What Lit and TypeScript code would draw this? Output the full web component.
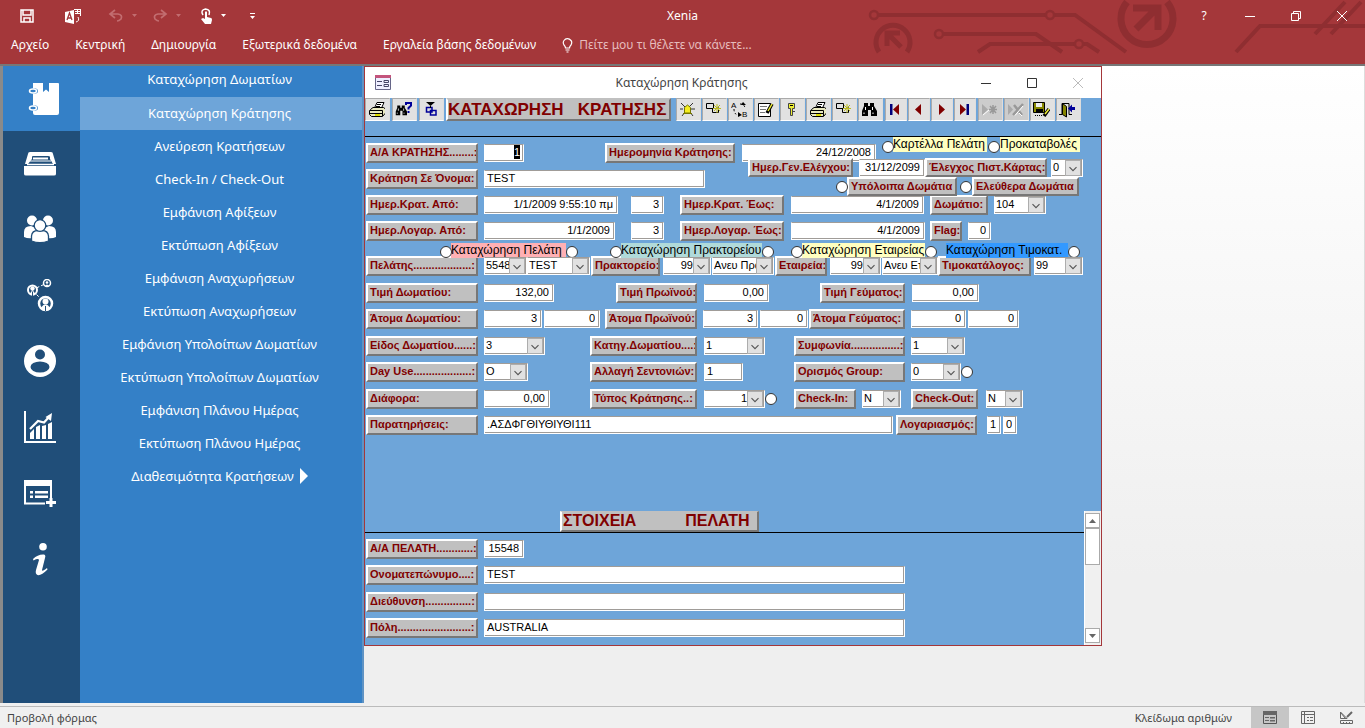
import { LitElement, html, css, svg, nothing } from "lit";
import { customElement, state } from "lit/decorators.js";
import { classMap } from "lit/directives/class-map.js";

const MENU = [
  "Καταχώρηση Δωματίων",
  "Καταχώρηση Κράτησης",
  "Ανεύρεση Κρατήσεων",
  "Check-In / Check-Out",
  "Εμφάνιση Αφίξεων",
  "Εκτύπωση Αφίξεων",
  "Εμφάνιση Αναχωρήσεων",
  "Εκτύπωση Αναχωρήσεων",
  "Εμφάνιση Υπολοίπων Δωματίων",
  "Εκτύπωση Υπολοίπων Δωματίων",
  "Εμφάνιση Πλάνου Ημέρας",
  "Εκτύπωση Πλάνου Ημέρας",
  "Διαθεσιμότητα Κρατήσεων",
];

const SECTIONS = [
  { name: "Κρατήσεις", icon: svg`<path fill="#fff" d="M6 1H16V10L19 7.500L22 10V1H31Q32 1 32 2V31Q32 33 30 33H8Q6 33 6 31V28.500H9Q11 28 11 26T9 23.500H6V11.500H9Q11 11 11 9T9 6.500H6Z"/><ellipse cx="6" cy="9" rx="3.500" ry="2" fill="none" stroke="#fff" stroke-width="1.500"/><ellipse cx="6" cy="26" rx="3.500" ry="2" fill="none" stroke="#fff" stroke-width="1.500"/>` },
  { name: "Δωμάτια", icon: svg`<path fill="#fff" d="M6 5H27Q29 5 29 7L32 17H29L26 12V10Q26 9 24 9H9Q8 9 8 10V12L4 17H1L4 7Q4 5 6 5ZM9 10.500H24V12.500H9ZM0 19H32V27Q32 28.500 30 28.500H2Q0 28.500 0 27Z"/><path stroke="#fff" d="M3 17.500H30" stroke-width="1.500"/><path stroke="#fff" d="M6 14H27"/>` },
  { name: "Πελάτες", icon: svg`<g fill="#fff"><circle cx="8" cy="7.500" r="5"/><circle cx="24" cy="7.500" r="5"/><path d="M0 24V19Q0 13 7 13L16 17L25 13Q32 13 32 19V24Q28 26 23 25H9Q4 26 0 24Z"/></g><g fill="#fff" stroke="#204e79" stroke-width="1.300"><path d="M7.500 28V23Q8 17.500 14 17.500H18Q24 17.500 24.500 23V28Q16 31.500 7.500 28Z"/><circle cx="16" cy="12.500" r="5.800"/></g>` },
  { name: "Συνεργάτες", icon: svg`<path stroke="#fff" d="M8 11L23 4M9 12L22 25" stroke-dasharray="3 2"/><g fill="#204e79" stroke="#fff"><circle cx="23" cy="4" r="3.500" stroke-width="1.500"/><circle cx="8.500" cy="11" r="4.500" stroke-width="2"/><circle cx="21.500" cy="24.500" r="6.500" stroke-width="2.500"/></g><g fill="#fff"><circle cx="23" cy="3.500" r="1.300"/><path d="M21 7Q23 4 25 7Z"/><circle cx="8.500" cy="9.500" r="2.200"/><path d="M5.500 15L8.500 11L11.500 15L8.500 17Z"/><circle cx="21.500" cy="22.500" r="3"/><path d="M17 30Q18 25.500 21.500 25.500T26 30L21.500 32Z"/></g><path d="M8.500 12.500V17M21.500 27V32" stroke="#204e79"/>` },
  { name: "Χρήστης", icon: svg`<circle cx="16" cy="16" r="16" fill="#fff"/><circle cx="16" cy="9.500" r="5" fill="#204e79"/><ellipse cx="16" cy="22" rx="9.500" ry="5.500" fill="#204e79"/>` },
  { name: "Στατιστικά", icon: svg`<path fill="#fff" d="M0 0H2V30H32V32H0ZM6 22L10 18V28H6ZM12 16L16 14V28H12ZM18 15L22 14V28H18ZM24 13L28 11V28H24Z"/><path fill="none" stroke="#fff" stroke-width="2.200" d="M6 18L14 10L20 11.500L25 6"/><path fill="#fff" d="M28 2L21.500 6L27 10Z"/>` },
  { name: "Λίστα", icon: svg`<path fill="#fff" d="M0 3H28V9H2V25.500H21V27.500H0ZM26 9H28V21H26ZM6 14H9V16.500H6ZM6 18.500H9V21H6ZM11 14H24V16.500H11ZM11 18.500H24V21H11Z"/><path stroke="#fff" stroke-width="3" d="M27 21V30M22 25.500H32"/>` },
  { name: "Πληροφορίες", icon: svg`<circle cx="19" cy="3.800" r="3.800" fill="#fff"/><path fill="#fff" d="M9 16Q14 11 20 11.500Q22 12 21 15L18 27Q18 29 23 25L23.500 26.500Q17 33 13.500 32Q11 31 12 27L15 17Q14.500 15 9.500 17.500Z"/>` },
];

const printer = svg`<path fill="#fff" stroke="#000" d="M6.500 7L9 1.500H16L13.500 7"/><path stroke="#000" d="M9 3.500H13M8 5.500H12"/><path fill="#e8e8c0" stroke="#000" d="M2.500 8.500L5 6.500H15.500L17.500 8V12L14.500 15.500H3.500L1.500 13.500V9.500Z"/><path stroke="#000" fill="none" d="M2 9.500H14.500V15M2 12.500H14"/><path stroke="#dd0" stroke-width="2" d="M7 14H12"/>`;
const binoculars = svg`<path d="M3 2H7V5H9V2H13V5L16 10V15H10V9H7V15H1V10L3 5Z"/><path stroke="#fff" d="M4.500 6V9M11.500 6V9M3 11.500V13M12 11.500V13"/>`;
const windows = svg`<path fill="none" stroke="#000" d="M1.500 2.500H8.500V7.500H1.500ZM7.500 7.500V11.500H13.500V6.500"/><path stroke="#bb2" d="M9 4L15 10M15 4L9 10M12 3V12M8 7.500H16"/>`;

const GLYPHS: Record<string, unknown> = {
  printer, windows,
  find: svg`<g>${binoculars}</g>`,
  findHelp: svg`<g transform="translate(0 3) scale(.75)">${binoculars}</g><path fill="none" stroke="#009" stroke-width="2" d="M11 4V2H16V4.500L13.500 7V8.500M13.500 10V12"/>`,
  relate: svg`<path d="M4 1H13L8.500 5Z"/><path fill="none" stroke="#009" stroke-width="1.500" d="M4.500 6.500H10V11H4.500ZM8.500 9.500H14V14H8.500Z"/><path stroke="#000" d="M8.500 5V7"/>`,
  bell: svg`<path stroke="#333" d="M2 2L6 6M14 2L10 6M1 8H4M12 8H16M3 15L6 11M14 15L11 11"/><path fill="#f5ee20" stroke="#770" d="M5.500 12V6.500L8.500 4L11.500 6.500V12Z"/><path d="M4 12.500H13" stroke="#770"/>`,
  sort: svg`<path fill="none" stroke="#000" stroke-dasharray="2 2" d="M3 8Q3 14 8 14M9 3Q14 3 14 8"/><path d="M7 11L11 14L7 16ZM12 1L15 4H10Z"/><text x="0" y="7" font-size="8">A</text><text x="11" y="16" font-size="8">B</text>`,
  edit: svg`<path fill="#fff" stroke="#000" d="M1.500 2.500H13.500V15.500H1.500Z"/><path stroke="#777" d="M3 5.500H10M3 8.500H9M3 11.500H8"/><path stroke="#000" stroke-width="3.500" d="M15 3L10 12"/><path stroke="#ee3" stroke-width="1.500" d="M15 3L11 10"/>`,
  key: svg`<path fill="#ee3" stroke="#444" d="M5.500 2.500H11.500V7.500H9.500V14.500H7.500V7.500H5.500ZM10 10.500H12"/><path stroke="#000" d="M7 4.500H10"/>`,
  first: svg`<path fill="#00007a" d="M3 3H5.500V14H3Z"/><path fill="#800000" d="M12 3V14L6 8.500Z"/>`,
  prev: svg`<path fill="#800000" d="M11 3V14L5 8.500Z"/>`,
  next: svg`<path fill="#800000" d="M6 3V14L12 8.500Z"/>`,
  last: svg`<path fill="#800000" d="M4 3V14L10 8.500Z"/><path fill="#00007a" d="M10.500 3H13V14H10.500Z"/>`,
  add: svg`<path fill="#aaa" d="M1 3V14L7 8.500Z"/><path stroke="#999" stroke-width="1.500" d="M12 4V13M8 8.500H16M9 5L15 12M15 5L9 12"/><path stroke="#fff" d="M2 14L8 9"/>`,
  remove: svg`<path fill="#aaa" d="M1 3V14L6 8.500Z"/><path stroke="#999" stroke-width="2.500" d="M6 14L16 3M7 4L15 14"/><path stroke="#fff" d="M8 14.500L16 5M12 12L15 15"/>`,
  save: svg`<path fill="#880" stroke="#000" d="M.500 1.500H11.500V11.500H.500Z"/><path fill="#eee" d="M3 2H9V6H3Z"/><path d="M3 8H10V11H3Z"/><path stroke="#000" stroke-dasharray="1 1" d="M2 14.500H9"/><path stroke="#000" stroke-width="3.500" d="M16 8L11 15"/><path stroke="#ee3" stroke-width="1.500" d="M16 8L12 13"/>`,
  exit: svg`<path fill="none" stroke="#000" d="M0 13.500H3V2.500H10V13.500H13"/><path fill="#880" stroke="#000" d="M3.500 2.500L7.500 5.500V16L3.500 13.500Z"/><path fill="#009" d="M16 6H13V3.500L9 7.500L13 11.500V9H16Z"/>`,
};

type Tool = [name: string, title: string];
const TOOLS: Tool[][] = [
  [["printer", "Εκτύπωση"], ["findHelp", "Αναζήτηση"], ["relate", "Σχέσεις"]],
  [["bell", "Ειδοποίηση"], ["windows", "Παράθυρα"], ["sort", "Αντικατάσταση"], ["edit", "Επεξεργασία"], ["key", "Κλειδί"], ["printer", "Εκτύπωση φόρμας"], ["windows", "Νέο παράθυρο"], ["find", "Εύρεση"]],
  [["first", "Πρώτη"], ["prev", "Προηγούμενη"], ["next", "Επόμενη"], ["last", "Τελευταία"]],
  [["add", "Προσθήκη"], ["remove", "Διαγραφή"], ["save", "Αποθήκευση"], ["exit", "Έξοδος"]],
];

const label = (text: string, id: string) => html`<label class="tag" for=${id}>${text}</label>`;
const field = (id: string, value: string, num = true, name = "") => html`
  <input class=${classMap({ field: true, num })} id=${id} .value=${value} aria-label=${name || nothing} />`;
const combo = (id: string, value: string, num = false, name = "") => html`
  <span class="combo">
    <select class=${classMap({ num })} id=${id} aria-label=${name || nothing}><option>${value}</option></select>
    <svg viewBox="0 0 16 16" aria-hidden="true"><path fill="none" stroke="#555" stroke-width="1.300" d="M4 7L8 11L12 7"/></svg>
  </span>`;
const dot = (id: string, name = "") => html`
  <input class="dot" type="radio" name=${id} id=${id} aria-label=${name || nothing} />`;
const note = (text: string, id: string, tone: string) => html`<label class="note ${tone}" for=${id}>${text}</label>`;

@customElement("app-root")
export class AppRoot extends LitElement {
  @state() private active = 1;

  static styles = css`
    :host { display: flex; flex-direction: column; min-height: 100vh; font: 12px/16px "Noto Sans", "Open Sans", sans-serif; color: #222; background: #f0f0f0; }
    *, *::before { box-sizing: border-box; }
    button, input, select { font: inherit; color: inherit; margin: 0; border-radius: 0; }
    button { border: 0; padding: 0; background: none; }
    svg { display: block; flex: none; }

    .ribbon { position: relative; height: 66px; background: #a4373a; color: #fff; border-bottom: 2px solid #777; overflow: hidden; }
    .art { position: absolute; top: 0; right: 0; }
    .caption { position: relative; display: grid; grid-template-columns: 1fr auto 1fr; align-items: center; height: 32px; }
    .quick { display: flex; align-items: center; padding-left: 19px; }
    .controls { display: flex; justify-content: flex-end; align-items: center; }
    .controls button { width: 46px; display: grid; place-items: center; }
    .tabs { position: relative; display: flex; align-items: center; gap: 26px; height: 26px; padding-left: 11px; }
    .tabs a { color: #fff; text-decoration: none; }
    .tabs .tell { display: flex; align-items: center; gap: 6px; color: #e6bcbd; }

    .body { flex: 1; display: flex; align-items: stretch; min-height: 637px; border-left: 3px solid #8a8a8a; }
    .rail { width: 77px; background: #204e79; }
    .rail button { display: grid; place-items: center; width: 77px; height: 66px; padding: 0 3px 2px 0; }
    .rail button:first-child { height: 65px; background: #3480c7; padding: 0 0 0 3px; }
    .menu { width: 284px; background: #3480c7; border-right: 2px solid #5f93c4; padding-top: 1px; color: #fff; font-size: 13px; }
    .menu button { display: flex; justify-content: center; align-items: center; gap: 6px; width: 100%; height: 33px; padding: 0 3px 2px 0; white-space: nowrap; }
    .menu button:first-child { height: 30px; padding-bottom: 6px; }
    .menu .on { background: #6ea5d9; }
    .desk { flex: 1; min-width: 0; background: linear-gradient(#fff, #efefef 80%); border-right: 1px solid #ddd; }

    .window { width: 738px; border: 1px solid #a4373a; background: #6ea5d9; font: 11px/14px "Liberation Sans", Arial, sans-serif; color: #000; }
    .title { display: grid; grid-template-columns: 16px 1fr auto; align-items: center; height: 31px; padding-left: 10px; background: #fff; color: #444; font: 12px/16px "Noto Sans", "Open Sans", sans-serif; }
    .title span { text-align: center; padding-left: 9px; }
    .tools { display: flex; height: 39px; gap: 2px; border-bottom: 1px solid #000; align-items: flex-start; }
    .group { display: flex; gap: 1px; }
    .group:first-child { gap: 2px; }
    .group button { display: grid; place-items: center; width: 25px; height: 23px; padding-right: 2px; background: #e1e1e1; border: 1px solid #aaa; border-right-color: #ddd; border-bottom-color: #fff; }
    .group.nav button { width: 22px; }
    .group button:disabled { background: #ccc; }
    .heading { margin: 0; height: 23px; background: #c0c0c0; border: solid; border-width: 2px; border-color: #c0c0c0 #777 #777 #fff; color: #800000; font-size: 17px; line-height: 19px; font-weight: bold; white-space: pre; }
    .tools .heading { width: 225px; margin-right: 3px; }

    .top { display: grid; }
    .top > * { grid-area: 1 / 1; }
    .lines { display: grid; gap: 6px; padding-top: 6px; }
    .side { justify-self: start; margin-left: 383px; display: grid; grid-template-rows: 21px 19px 19px; align-content: start; }
    .row { display: grid; grid-auto-flow: column; height: 20px; align-items: center; }
    .side .row { height: 19px; }
    .row > :nth-child(1) { grid-column: 2; }
    .row > :nth-child(2) { grid-column: 4; }
    .row > :nth-child(3) { grid-column: 6; }
    .row > :nth-child(4) { grid-column: 8; }
    .row > :nth-child(5) { grid-column: 10; }
    .row > :nth-child(6) { grid-column: 12; }
    .row > :nth-child(7) { grid-column: 14; }
    .row > :nth-child(8) { grid-column: 16; }
    .row > :nth-child(9) { grid-column: 18; }
    .row > :nth-child(10) { grid-column: 20; }
    .row > :nth-child(11) { grid-column: 22; }
    .number { grid-template-columns: 1px 112px 6px 40px 81px 130px 7px 134px; }
    .guest { grid-template-columns: 1px 112px 6px 221px; }
    .cards { grid-template-columns: 134px 11px 0 94px 1px 11px 1px 80px; }
    .check { grid-template-columns: 0 105px 6px 66px 0 122px 4px 32px; }
    .rest { grid-template-columns: 88px 11px 0 110px 3px 11px 1px 107px; }
    .booked { grid-template-columns: 1px 112px 6px 134px 13px 33px 16px 104px 7px 133px 6px 58px 6px 52px; }
    .billed { grid-template-columns: 1px 112px 6px 131px 16px 33px 16px 104px 7px 134px 5px 32px 6px 23px; }
    .entries { grid-template-columns: 75px 11px 0 115px 0 11px 33px 11px 0 141px 0 11px 18px 11px 0 123px 0 11px 10px 122px 0 11px; }
    .parties { grid-template-columns: 1px 112px 6px 43px 0 63px 1px 69px 3px 48px 1px 62px 1px 52px 3px 51px 1px 56px 0 93px 3px 49px; }
    .prices { grid-template-columns: 1px 112px 6px 70px 62px 81px 7px 65px 51px 85px 7px 67px; }
    .people { grid-template-columns: 1px 112px 6px 58px 2px 56px 5px 92px 6px 55px 2px 48px 1px 96px 6px 55px 2px 51px; }
    .kinds { grid-template-columns: 1px 112px 6px 61px 45px 107px 7px 61px 29px 111px 6px 54px; }
    .usage { grid-template-columns: 1px 112px 6px 44px 62px 107px 7px 39px 51px 111px 6px 50px 0 11px; }
    .misc { grid-template-columns: 1px 112px 6px 66px 40px 107px 7px 61px 0 11px 18px 62px 6px 39px 10px 67px 8px 37px; }
    .remarks { grid-template-columns: 1px 112px 6px 409px 3px 81px 10px 14px 2px 14px; }
    .client { grid-template-columns: 1px 112px 6px 421px; }
    .entries.row { height: 17px; align-items: end; margin-bottom: -2px; position: relative; }
    .entries .note { align-self: end; }
    .more { display: grid; gap: 6px; padding-top: 7px; }
    .more .row:nth-child(even) { margin-bottom: 1px; }

    .tag { align-self: stretch; padding: 1px 0 0 2px; background: #c0c0c0; border: 2px solid; border-color: #fff #777 #777 #fff; color: #800000; font-weight: bold; line-height: 12px; white-space: nowrap; overflow: hidden; }
    .field, .combo { width: 100%; min-width: 0; height: 18px; background: #fff; border: 1px solid #fff; border-top-color: #a09c98; box-shadow: inset -1px -1px #a09c98; }
    .field { padding: 0 4px 2px 2px; outline: 0; }
    .num { text-align: right; text-align-last: right; }
    .keyed { display: flex; justify-content: flex-end; padding: 0 3px 2px; }
    .keyed input { width: 6px; height: 14px; padding: 0; border: 0; background: #000; color: #fff; outline: 0; }
    .combo { display: flex; position: relative; padding: 0 1px 1px 0; overflow: hidden; }
    .combo select { flex: 1; width: 0; min-width: 0; height: 15px; appearance: none; border: 0; background: #fff; padding: 0 0 0 1px; line-height: 15px; outline: 0; }
    .combo svg { width: 16px; height: 16px; background: #e1e1e1; border: 1px solid #adadad; pointer-events: none; }
    .dot { appearance: none; width: 12px; height: 12px; border: 1px solid #333; border-radius: 50%; background: #fff; position: relative; }
    .note { align-self: start; height: 15px; font-size: 12px; line-height: 14px; white-space: nowrap; overflow: hidden; }
    .yellow { background: #ffffc0; }
    .pink { background: #ffb0b4; }
    .teal { background: #b0dada; }
    .blue { background: #3399ff; }

    .detail { display: flex; height: 134px; margin-top: 75px; overflow: hidden; }
    .sheet { flex: 1; min-width: 0; }
    .band { display: flex; height: 22px; padding-left: 195px; border-bottom: 1px solid #000; }
    .band .heading { width: 199px; height: 21px; padding-left: 1px; border-top-width: 1px; line-height: 18px; font-size: 16px; }
    .sheet .more { padding-top: 6px; }
    .scroll { width: 17px; background: #f0f0f0; display: flex; flex-direction: column; padding: 2px 1px 2px 0; border-left: 1px solid #fff; }
    .scroll button { height: 15px; background: #fff; border: 1px solid #aaa; display: grid; place-items: center; }
    .thumb { height: 37px; background: #fff; border: 1px solid #aaa; margin-bottom: auto; }

    .status { display: flex; align-items: center; height: 22px; margin-top: 3px; padding-left: 7px; border-top: 1px solid #bbb; background: #f0f0f0; color: #444; font-size: 11px; line-height: 14px; }
    .status .views { display: flex; margin-left: 19px; align-self: stretch; }
    .status button { width: 38px; display: grid; place-items: center; }
    .status .on { background: #c6c6c6; }
    .lock { margin-left: auto; }
  `;

  render() {
    return html`
      ${this.ribbon()}
      <div class="body">
        <nav class="rail">
          ${SECTIONS.map((s) => html`<button aria-label=${s.name}><svg width="32" height="33" viewBox="0 0 32 33">${s.icon}</svg></button>`)}
        </nav>
        <nav class="menu">
          ${MENU.map((text, i) => html`
            <button class=${classMap({ on: i === this.active })} @click=${() => (this.active = i)}>
              ${text}${i === MENU.length - 1 ? html`<svg width="8" height="16"><path fill="#fff" d="M0 0L8 8L0 16Z"/></svg>` : nothing}
            </button>`)}
        </nav>
        <main class="desk">${this.window()}</main>
      </div>
      <footer class="status">
        <span>Προβολή φόρμας</span>
        <span class="lock">Κλείδωμα αριθμών</span>
        <span class="views">
          <button class="on" aria-label="Προβολή φόρμας"><svg width="14" height="13"><path fill="none" stroke="#555" d="M.500 .500H13.500V12.500H.500Z"/><path fill="#666" d="M0 0H14V4H0ZM2 6H6V7H2ZM2 9H6V10H2ZM7 6H12V7.500H7ZM7 9H12V10.500H7Z"/></svg></button>
          <button aria-label="Προβολή διάταξης"><svg width="14" height="13"><path fill="none" stroke="#666" d="M.500 .500H13.500V12.500H.500ZM0 3.500H14M3.500 0V13M6 6.500H8M9 6.500H12M6 9.500H8M9 9.500H12"/></svg></button>
          <button aria-label="Προβολή σχεδίασης"><svg width="15" height="14"><path fill="none" stroke="#666" d="M1.500 1V7.500H8ZM2 2L6 7M1.500 9.500H13.500V12.500H1.500ZM4.500 11V13M7.500 11V13M10.500 11V13"/><path stroke="#666" stroke-width="2" d="M13 1L8 6"/></svg></button>
        </span>
      </footer>`;
  }

  private ribbon() {
    return html`
      <header class="ribbon">
        <svg class="art" width="500" height="64" viewBox="865 0 500 64" aria-hidden="true">
          <g fill="none" stroke="#8f2e31" stroke-width="4">
            <circle cx="874" cy="15" r="4" stroke-width="2.500"/><path d="M878 15H1046M1054 15H1075L1126 52"/><circle cx="1050" cy="15" r="4" stroke-width="2.500"/>
            <circle cx="939" cy="34" r="4" stroke-width="2.500"/><path d="M943 34H1036L1062 52"/>
            <path d="M978 52L990 44H1075M1083 44H1087L1099 52"/><circle cx="1079" cy="44" r="4" stroke-width="2.500"/>
            <path d="M879 52A17 17 0 1 1 907 52" stroke-width="5"/>
            <path d="M900 33H887V46M888 34L901 47" stroke-width="5"/>
            <path d="M1127 2A26 26 0 1 0 1167 2" stroke-width="7"/>
            <path d="M1133 8H1158V30M1156 9L1136 29" stroke-width="7"/>
            <path d="M1236 52L1260 26H1365M1315 34L1345 2M1331 34L1361 2"/>
          </g>
        </svg>
        <div class="caption">
          <div class="quick">
            <svg width="225" height="18" viewBox="19 6 225 18" role="img" aria-label="Γραμμή γρήγορης πρόσβασης">
              <path fill="none" stroke="#fff" stroke-width="1.500" d="M21 9H33V21H21ZM23 9V14H31V9M24 21V17H30V21"/>
              <path fill="#fff" d="M65 11L74 9V23L65 21Z"/><path fill="none" stroke="#fff" d="M74 8.500H81M75 10.500H81M75 12.500H81M80.500 8V15M77.500 8V13M76 21Q80 20 78 16"/><path fill="none" stroke="#a4373a" stroke-width="1.300" d="M67 19L69.500 12L72 19M68 17H71"/>
              <g fill="none" stroke="#c26d70" stroke-width="1.700"><path d="M115 9L110 13L115 17M110 13H118Q123 14 121 18Q119 20 117 20"/><path d="M161 9L166 13L161 17M166 13H158Q153 14 155 18Q157 20 159 20"/></g>
              <path fill="#c26d70" d="M132 13H137L134.500 16ZM176 13H181L178.500 16Z"/>
              <path fill="#fff" d="M205 11Q206 9.500 207 11V16L211 17Q212 17 212 19L211 23H205L201 18L203 17L205 18Z"/><path fill="none" stroke="#fff" stroke-width="1.500" d="M203 14Q200 9 205.500 8Q211 8.500 209 14"/>
              <path fill="#fff" d="M221 13H226L223.500 16Z"/>
            </svg>
            <svg width="16" height="10"><path fill="#fff" d="M6 2H11V3H6ZM6 5H11L8.500 8Z"/></svg>
          </div>
          <span>Xenia</span>
          <div class="controls">
            <button aria-label="Βοήθεια">?</button>
            <button aria-label="Ελαχιστοποίηση"><svg width="10" height="10"><path stroke="#fff" d="M0 5.500H10"/></svg></button>
            <button aria-label="Επαναφορά"><svg width="10" height="10"><path fill="none" stroke="#fff" d="M.500 2.500H7.500V9.500H.500ZM2.500 2V.500H9.500V7.500H8"/></svg></button>
            <button aria-label="Κλείσιμο"><svg width="10" height="10"><path stroke="#fff" d="M0 0L10 10M10 0L0 10"/></svg></button>
          </div>
        </div>
        <nav class="tabs">
          <a href="#">Αρχείο</a><a href="#">Κεντρική</a><a href="#">Δημιουργία</a><a href="#">Εξωτερικά δεδομένα</a><a href="#">Εργαλεία βάσης δεδομένων</a>
          <a class="tell" href="#"><svg width="11" height="15"><path fill="none" stroke="#fff" stroke-width="1.200" d="M3.500 10Q3.500 8.500 2 7Q.500 4.500 2 2.500T5.500 .700T9 2.500T9 7Q7.500 8.500 7.500 10ZM3.500 12H7.500M4.500 14H6.500"/></svg>Πείτε μου τι θέλετε να κάνετε...</a>
        </nav>
      </header>`;
  }

  private window() {
    return html`
      <section class="window">
        <div class="title">
          <svg width="16" height="15"><path fill="#eef" stroke="#668" d="M.500 .500H15.500V14.500H.500Z"/><path fill="#c3547c" d="M0 0H16V3H0Z"/><path stroke="#446" fill="none" d="M2 6.500H7M2 10.500H7M9 5.500H13.500V7.500H9ZM9 9.500H13.500V11.500H9Z"/></svg>
          <span>Καταχώρηση Κράτησης</span>
          <div class="controls">
            <button aria-label="Ελαχιστοποίηση"><svg width="10" height="10"><path stroke="#333" d="M0 5.500H10"/></svg></button>
            <button aria-label="Μεγιστοποίηση"><svg width="10" height="10"><path fill="none" stroke="#333" d="M.500 .500H9.500V9.500H.500Z"/></svg></button>
            <button aria-label="Κλείσιμο"><svg width="10" height="10"><path stroke="#bbb" d="M0 0L10 10M10 0L0 10"/></svg></button>
          </div>
        </div>
        <div class="tools">
          ${TOOLS.map((tools, g) => html`
            <div class=${classMap({ group: true, nav: g === 2 })}>
              ${tools.map(([name, title]) => html`
                <button aria-label=${title} ?disabled=${name === "add" || name === "remove"}><svg width="17" height="17">${GLYPHS[name]}</svg></button>`)}
            </div>
            ${g === 0 ? html`<h1 class="heading">ΚΑΤΑΧΩΡΗΣΗ   ΚΡΑΤΗΣΗΣ</h1>` : nothing}`)}
        </div>
        <form>
          <div class="top">
            <div class="lines">
              <div class="row number">
                ${label("Α/Α ΚΡΑΤΗΣΗΣ........:", "num")}
                <span class="field keyed"><input id="num" .value=${"1"} /></span>
                ${label("Ημερομηνία Κράτησης:", "date")}${field("date", "24/12/2008")}
              </div>
              <div class="row guest">${label("Κράτηση Σε Όνομα:", "guest")}${field("guest", "TEST", false)}</div>
              <div class="row booked">
                ${label("Ημερ.Κρατ. Από:", "from")}${field("from", "1/1/2009 9:55:10 πμ")}${field("nights", "3", true, "Διανυκτερεύσεις")}
                ${label("Ημερ.Κρατ. Έως:", "to")}${field("to", "4/1/2009")}${label("Δωμάτιο:", "room")}${combo("room", "104")}
              </div>
              <div class="row billed">
                ${label("Ημερ.Λογαρ. Από:", "bfrom")}${field("bfrom", "1/1/2009")}${field("bnights", "3", true, "Ημέρες λογαριασμού")}
                ${label("Ημερ.Λογαρ. Έως:", "bto")}${field("bto", "4/1/2009")}${label("Flag:", "flag")}${field("flag", "0")}
              </div>
            </div>
            <div class="side">
              <div class="row cards">${dot("card")}${note("Καρτέλλα Πελάτη", "card", "yellow")}${dot("prepaid")}${note("Προκαταβολές", "prepaid", "yellow")}</div>
              <div class="row check">${label("Ημερ.Γεν.Ελέγχου:", "gen")}${field("gen", "31/12/2099")}${label("Έλεγχος Πιστ.Κάρτας:", "credit")}${combo("credit", "0")}</div>
              <div class="row rest">${dot("left")}${label("Υπόλοιπα Δωμάτια", "left")}${dot("free")}${label("Ελεύθερα Δωμάτια", "free")}</div>
            </div>
          </div>
          <div class="row entries">
            ${dot("e1")}${note("Καταχώρηση Πελάτη", "e1", "pink")}${dot("e2", "Πελάτης")}
            ${dot("e3")}${note("Καταχώρηση Πρακτορείου", "e3", "teal")}${dot("e4", "Πρακτορείο")}
            ${dot("e5")}${note("Καταχώρηση Εταιρείας", "e5", "yellow")}${dot("e6", "Εταιρεία")}
            ${note("Καταχώρηση Τιμοκατ.", "e7", "blue")}${dot("e7")}
          </div>
          <div class="row parties">
            ${label("Πελάτης...................:", "cl")}${combo("cl", "5548")}${combo("cln", "TEST", false, "Όνομα πελάτη")}
            ${label("Πρακτορείο:", "ag")}${combo("ag", "99", true)}${combo("agn", "Ανευ Πράκτορα", false, "Όνομα πρακτορείου")}
            ${label("Εταιρεία:", "co")}${combo("co", "99", true)}${combo("con", "Ανευ Εταιρείας", false, "Όνομα εταιρείας")}
            ${label("Τιμοκατάλογος:", "pl")}${combo("pl", "99")}
          </div>
          <div class="more">
            <div class="row prices">
              ${label("Τιμή Δωματίου:", "p1")}${field("p1", "132,00")}${label("Τιμή Πρωϊνού:", "p2")}${field("p2", "0,00")}${label("Τιμή Γεύματος:", "p3")}${field("p3", "0,00")}
            </div>
            <div class="row people">
              ${label("Άτομα Δωματίου:", "a1")}${field("a1", "3")}${field("a2", "0", true, "Παιδιά δωματίου")}
              ${label("Άτομα Πρωϊνού:", "a3")}${field("a3", "3")}${field("a4", "0", true, "Παιδιά πρωϊνού")}
              ${label("Άτομα Γεύματος:", "a5")}${field("a5", "0")}${field("a6", "0", true, "Παιδιά γεύματος")}
            </div>
            <div class="row kinds">
              ${label("Είδος Δωματίου......:", "k1")}${combo("k1", "3")}${label("Κατηγ.Δωματίου....:", "k2")}${combo("k2", "1")}${label("Συμφωνία................:", "k3")}${combo("k3", "1")}
            </div>
            <div class="row usage">
              ${label("Day Use...................:", "u1")}${combo("u1", "Ο")}${label("Αλλαγή Σεντονιών:", "u2")}${field("u2", "1", false)}${label("Ορισμός Group:", "u3")}${combo("u3", "0")}${dot("u4", "Group")}
            </div>
            <div class="row misc">
              ${label("Διάφορα:", "m1")}${field("m1", "0,00")}${label("Τύπος Κράτησης..:", "m2")}${combo("m2", "1", true)}${dot("m3", "Τύπος")}
              ${label("Check-In:", "m4")}${combo("m4", "Ν")}${label("Check-Out:", "m5")}${combo("m5", "Ν")}
            </div>
            <div class="row remarks">
              ${label("Παρατηρήσεις:", "n1")}${field("n1", ".ΑΣΔΦΓΘΙΥΘΙΥΘΙ111", false)}${label("Λογαριασμός:", "n2")}${field("n2", "1")}${field("n3", "0", true, "Υπολογαριασμός")}
            </div>
          </div>
          <div class="detail">
            <div class="sheet">
              <div class="band"><h2 class="heading">ΣΤΟΙΧΕΙΑ           ΠΕΛΑΤΗ</h2></div>
              <div class="more">
                <div class="row number">${label("Α/Α ΠΕΛΑΤΗ............:", "c1")}${field("c1", "15548")}</div>
                <div class="row client">${label("Ονοματεπώνυμο....:", "c2")}${field("c2", "TEST", false)}</div>
                <div class="row client">${label("Διεύθυνση...............:", "c3")}${field("c3", "", false)}</div>
                <div class="row client">${label("Πόλη........................:", "c4")}${field("c4", "AUSTRALIA", false)}</div>
              </div>
            </div>
            <div class="scroll">
              <button type="button" aria-label="Επάνω"><svg width="7" height="4"><path fill="#666" d="M0 4L3.500 0L7 4Z"/></svg></button>
              <div class="thumb"></div>
              <button type="button" aria-label="Κάτω"><svg width="7" height="4"><path fill="#666" d="M0 0L3.500 4L7 0Z"/></svg></button>
            </div>
          </div>
        </form>
      </section>`;
  }
}
